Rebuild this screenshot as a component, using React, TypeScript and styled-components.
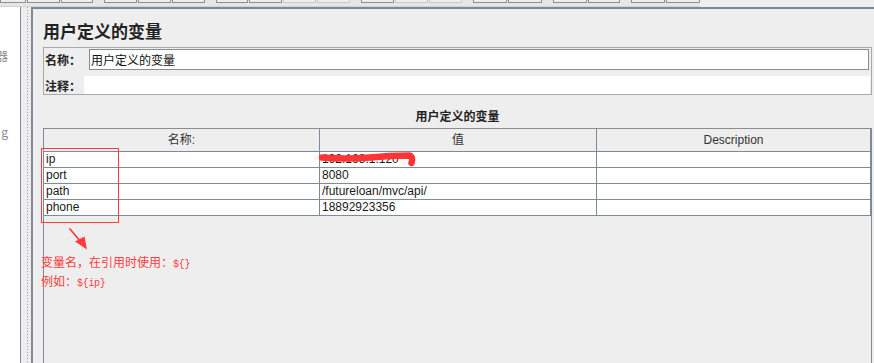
import React from "react";
import styled, { createGlobalStyle } from "styled-components";

const GlobalStyle = createGlobalStyle`
  html, body {
    margin: 0;
    padding: 0;
    background: #eeeeee;
    overflow: hidden;
  }
  * {
    box-sizing: border-box;
  }
`;

const ui = `"Liberation Sans", "Noto Sans CJK SC", sans-serif`;
const cjk = `"Noto Sans CJK SC", "Liberation Sans", sans-serif`;
const line = "#7d8b99";
const red = "#ff3b3b";

const Page = styled.div`
  position: relative;
  width: 874px;
  height: 363px;
  display: flex;
  flex-direction: column;
  background: #eeeeee;
  overflow: hidden;
  font-family: ${ui};
  font-size: 12px;
  color: #222;
`;

// top toolbar, only its lower edge is visible
const Toolbar = styled.div`
  width: 700px;
  height: 7px;
  flex-shrink: 0;
  display: flex;
  align-items: flex-end;
  gap: 11px;
  padding-bottom: 3px;
  background: #e6e6e6;
  border-bottom: 1px solid #d3d3d3;
  overflow: hidden;
`;

const ToolGroup = styled.div`
  display: flex;
  align-items: flex-end;
  gap: 1px;
`;

const ToolButton = styled.div<{ $w: number; $off?: boolean }>`
  width: ${(p) => p.$w}px;
  height: 20px;
  flex-shrink: 0;
  background: #ededed;
  border: 1px solid ${(p) => (p.$off ? "#cbcbcb" : "#8f8f8f")};
`;

const Body = styled.div`
  flex: 1;
  min-height: 0;
  display: flex;
`;

const Tree = styled.div`
  width: 21px;
  flex-shrink: 0;
  background: #ffffff;
  border-right: 1px solid ${line};
  padding-top: 39px;
  overflow: hidden;
`;

const TreeItem = styled.div<{ $shift: number }>`
  height: 19px;
  line-height: 19px;
  display: flex;
  justify-content: flex-end;
  white-space: nowrap;
  font-family: ${cjk};
  font-size: 12px;
  color: #8a8a8a;

  span {
    margin-right: ${(p) => p.$shift}px;
  }
`;

const Splitter = styled.div`
  width: 10px;
  flex-shrink: 0;
  background: repeating-linear-gradient(
        to bottom,
        #9c9c9c 0 1px,
        transparent 1px 3px
      )
      6px 0 / 1px 100% no-repeat,
    #eeeeee;
`;

const Panel = styled.div`
  flex: 1;
  min-width: 0;
  display: flex;
  flex-direction: column;
  border-top: 2px solid ${line};
  border-left: 2px solid ${line};
  padding: 12px 2px 0 10px;
`;

const Title = styled.h1`
  margin: 0;
  font-family: ${cjk};
  font-size: 17px;
  font-weight: 700;
  line-height: 20px;
  color: #222;
`;

const NameBox = styled.div`
  margin-top: 6px;
  border: 1px solid #a9a9a9;
  padding: 1px 1px 0 1px;
`;

const FieldRow = styled.div<{ $h: number; $mt?: number }>`
  display: flex;
  align-items: center;
  height: ${(p) => p.$h}px;
  margin-top: ${(p) => p.$mt ?? 0}px;
`;

const FieldLabel = styled.div<{ $w: number }>`
  width: ${(p) => p.$w}px;
  flex-shrink: 0;
  font-family: ${cjk};
  font-size: 12px;
  font-weight: 700;
  color: #222;
`;

const TextInput = styled.div`
  flex: 1;
  height: 21px;
  margin-right: 1px;
  padding-left: 1px;
  background: #ffffff;
  border: 1px solid #858d95;
  font-family: ${cjk};
  font-size: 12px;
  line-height: 19px;
  color: #111;
`;

const PlainField = styled.div`
  flex: 1;
  height: 100%;
  background: #ffffff;
`;

const TableTitle = styled.div`
  margin-top: 13px;
  line-height: 16px;
  text-align: center;
  font-family: ${cjk};
  font-size: 12px;
  font-weight: 700;
  color: #222;
`;

const ScrollPane = styled.div`
  margin-top: 4px;
  flex: 1;
  border-top: 1px solid #8c8c8c;
  border-left: 1px solid ${line};
  border-right: 1px solid ${line};
  background: #eeeeee;
`;

const GridRow = styled.div<{ $head?: boolean }>`
  display: grid;
  grid-template-columns: 276px 277px 1fr;
  height: ${(p) => (p.$head ? 23 : 16)}px;
  background: ${(p) => (p.$head ? "#eeeeee" : "#ffffff")};
  border-bottom: 1px solid ${line};
`;

const HeadCell = styled.div`
  border-right: 1px solid ${line};
  text-align: center;
  line-height: 22px;
  font-family: ${ui};
  font-size: 12px;
  color: #333;
`;

const Cell = styled.div`
  border-right: 1px solid ${line};
  padding-left: 2px;
  line-height: 15px;
  font-size: 12px;
  white-space: nowrap;
  overflow: hidden;
  color: #1a1a1a;
`;

// red hand-drawn notes lying over the screenshot
const Overlay = styled.div`
  position: absolute;
  inset: 0;
  pointer-events: none;
`;

const Marks = styled.svg`
  position: absolute;
  left: 0;
  top: 0;
`;

const Note = styled.div`
  position: absolute;
  left: 41px;
  top: 254px;
  font-family: ${cjk};
  font-size: 12px;
  line-height: 16px;
  color: ${red};
  white-space: nowrap;

  code {
    font-family: "Liberation Mono", monospace;
    font-size: 10px;
    letter-spacing: -0.3px;
  }
`;

const toolGroups: { w: number; off?: boolean }[][] = [
  [{ w: 26 }, { w: 33 }, { w: 32 }],
  [{ w: 33 }, { w: 33 }, { w: 33 }],
  [{ w: 32 }, { w: 33 }, { w: 33, off: true }, { w: 33, off: true }],
  [{ w: 33 }, { w: 33, off: true }, { w: 33, off: true }],
  [{ w: 34 }, { w: 34 }],
  [{ w: 34 }, { w: 32 }],
  [{ w: 34 }, { w: 34 }],
];

const variables = [
  { name: "ip", value: "192.168.1.120" },
  { name: "port", value: "8080" },
  { name: "path", value: "/futureloan/mvc/api/" },
  { name: "phone", value: "18892923356" },
];

const App = () => {
  return (
    <>
      <GlobalStyle />
      <Page>
        <Toolbar>
          {toolGroups.map((group, i) => (
            <ToolGroup key={i}>
              {group.map((b, j) => (
                <ToolButton key={j} $w={b.w} $off={b.off} />
              ))}
            </ToolGroup>
          ))}
        </Toolbar>
        <Body>
          <Tree>
            <TreeItem $shift={12}>
              <span>器</span>
            </TreeItem>
            <TreeItem $shift={0} />
            <TreeItem $shift={0} />
            <TreeItem $shift={0} />
            <TreeItem $shift={12}>
              <span>g</span>
            </TreeItem>
          </Tree>
          <Splitter />
          <Panel>
            <Title>用户定义的变量</Title>
            <NameBox>
              <FieldRow $h={21}>
                <FieldLabel $w={44}>名称：</FieldLabel>
                <TextInput>用户定义的变量</TextInput>
              </FieldRow>
              <FieldRow $h={18} $mt={6}>
                <FieldLabel $w={39}>注释：</FieldLabel>
                <PlainField />
              </FieldRow>
            </NameBox>
            <TableTitle>用户定义的变量</TableTitle>
            <ScrollPane>
              <GridRow $head>
                <HeadCell>名称:</HeadCell>
                <HeadCell>值</HeadCell>
                <HeadCell>Description</HeadCell>
              </GridRow>
              {variables.map((v) => (
                <GridRow key={v.name}>
                  <Cell>{v.name}</Cell>
                  <Cell>{v.value}</Cell>
                  <Cell />
                </GridRow>
              ))}
            </ScrollPane>
          </Panel>
        </Body>

        <Overlay>
          <Marks width="874" height="363" viewBox="0 0 874 363">
            <rect
              x="41.5"
              y="148.5"
              width="77"
              height="74"
              fill="none"
              stroke={red}
              strokeWidth="1"
            />
            <line
              x1="70"
              y1="229"
              x2="80"
              y2="241"
              stroke={red}
              strokeWidth="1.8"
              strokeLinecap="round"
            />
            <polygon points="75,241.5 87,249.5 84.5,236.5" fill={red} />
            <path
              d="M322 157.5 Q 345 159.5 370 157.5 Q 390 155.5 409 155.5 Q 413.5 156.5 411.5 163"
              fill="none"
              stroke="#ff3434"
              strokeWidth="6.5"
              strokeLinecap="round"
              strokeLinejoin="round"
            />
          </Marks>
          <Note>
            <div>
              变量名，在引用时使用：<code>{"${}"}</code>
            </div>
            <div>
              例如：<code>{"${ip}"}</code>
            </div>
          </Note>
        </Overlay>
      </Page>
    </>
  );
};

export default App;
